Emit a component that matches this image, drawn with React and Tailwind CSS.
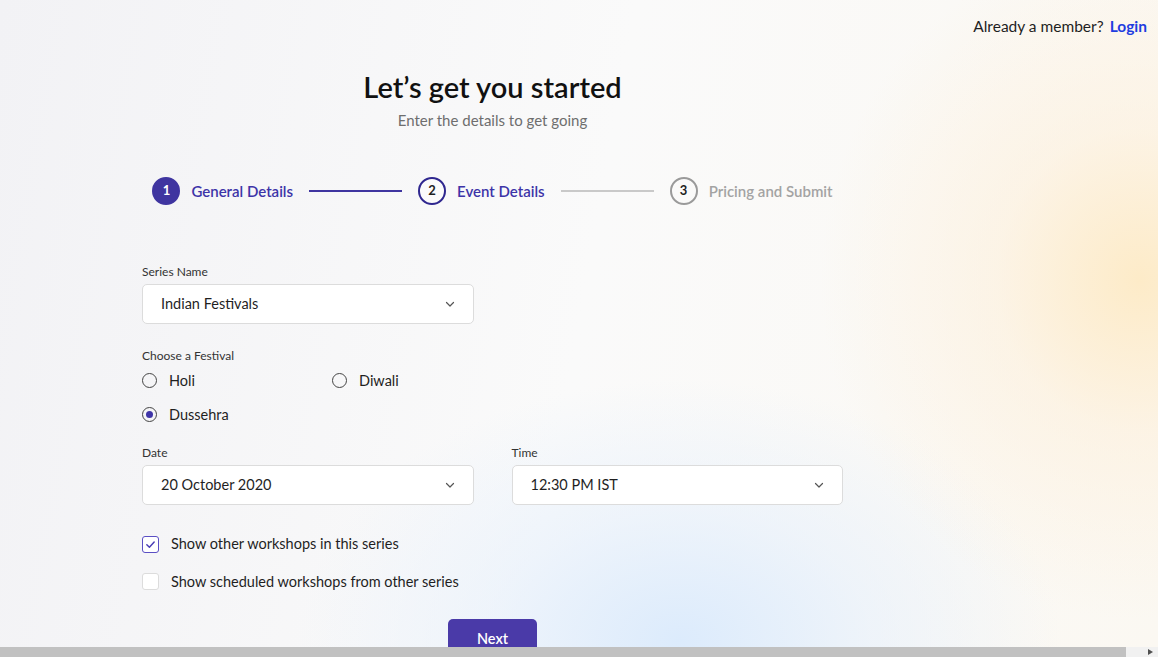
import React from 'react';

const font = { fontFamily: 'Lato, "Noto Sans", sans-serif' };

const Chevron = () => (
  <svg width="12" height="12" viewBox="0 0 12 12" fill="none" stroke="#555" strokeWidth="1.2" strokeLinecap="round" strokeLinejoin="round">
    <path d="M2.5 4.5 6 8l3.5-3.5" />
  </svg>
);

const Select = ({ value, className = '' }) => (
  <div className={`flex h-[40px] items-center justify-between rounded-[5px] border border-[#dcdcdc] bg-white pl-[18px] pr-[17px] text-[14.5px] text-[#1f1f1f] ${className}`}>
    <span>{value}</span>
    <Chevron />
  </div>
);

const Radio = ({ label, checked }) => (
  <div className="flex items-center gap-[12px]">
    <span className="flex h-[15px] w-[15px] items-center justify-center rounded-full border-[1.5px] border-[#444]">
      {checked && <span className="h-[7px] w-[7px] rounded-full bg-[#3f35a8]" />}
    </span>
    <span className="text-[14.5px] text-[#1f1f1f]">{label}</span>
  </div>
);

const Checkbox = ({ label, checked }) => (
  <div className="flex items-center gap-[12px]">
    <span className={`flex h-[17px] w-[17px] items-center justify-center rounded-[3px] border-[1.5px] bg-white ${checked ? 'border-[#5b4fc4]' : 'border-[#dcdcdc]'}`}>
      {checked && (
        <svg width="11" height="11" viewBox="0 0 12 12" fill="none" stroke="#4a3db5" strokeWidth="1.6" strokeLinecap="round" strokeLinejoin="round">
          <path d="M2 6.3 4.8 9 10 3.2" />
        </svg>
      )}
    </span>
    <span className="text-[14.5px] text-[#1f1f1f]">{label}</span>
  </div>
);

const Step = ({ n, label, state }) => {
  const circle =
    state === 'done'
      ? 'bg-[#3f35a0] text-white border-[#3f35a0]'
      : state === 'active'
      ? 'border-[#2f278f] text-[#1f1f1f] bg-white/40'
      : 'border-[#9a9a9a] text-[#1f1f1f]';
  const text = state === 'todo' ? 'text-[#a3a3a3]' : 'text-[#3d34a8]';
  return (
    <div className="flex items-center gap-[11px]">
      <span className={`flex h-[28px] w-[28px] items-center justify-center rounded-full border-2 text-[13px] font-bold ${circle}`}>{n}</span>
      <span className={`text-[15px] font-semibold ${text}`}>{label}</span>
    </div>
  );
};

export default function App() {
  return (
    <div
      style={font}
      className="flex h-[657px] w-[1158px] flex-col overflow-hidden bg-[#f6f6f8] bg-[radial-gradient(ellipse_320px_340px_at_1140px_280px,#fdebc8_0%,rgba(253,240,220,0.6)_45%,rgba(255,255,255,0)_100%),radial-gradient(ellipse_380px_260px_at_680px_640px,#dcebfc_0%,rgba(230,240,252,0.6)_50%,rgba(255,255,255,0)_100%),linear-gradient(100deg,#f2f2f5_0%,#fafafa_50%,#fbf8f2_100%)]"
    >
      <div className="relative flex-1 overflow-hidden">
        <div className="flex justify-end pr-[11px] pt-[15px] text-[15.5px] text-[#1f1f1f]">
          <span>Already a member?</span>
          <span className="ml-[6px] font-bold text-[#1f3de0]">Login</span>
        </div>

        <div className="ml-[142px] w-[701px]">
          <h1 className="mt-[31px] text-center text-[29px] font-semibold leading-[36px] text-[#111]">Let’s get you started</h1>
          <p className="mt-[4px] text-center text-[15px] text-[#6e6e6e]">Enter the details to get going</p>

          <div className="mt-[45px] flex items-center justify-center gap-[16px]">
            <Step n="1" label="General Details" state="done" />
            <span className="h-[2px] w-[93px] bg-[#3f35a0]" />
            <Step n="2" label="Event Details" state="active" />
            <span className="h-[1.5px] w-[93px] bg-[#c9c9c9]" />
            <Step n="3" label="Pricing and Submit" state="todo" />
          </div>

          <div className="mt-[58px]">
            <div className="text-[12px] text-[#333]">Series Name</div>
            <Select value="Indian Festivals" className="mt-[3px] w-[332px]" />
          </div>

          <div className="mt-[23px]">
            <div className="text-[12px] text-[#333]">Choose a Festival</div>
            <div className="mt-[5px] grid w-[300px] grid-cols-[190px_1fr] gap-y-[12px]">
              <Radio label="Holi" />
              <Radio label="Diwali" />
              <Radio label="Dussehra" checked />
            </div>
          </div>

          <div className="mt-[19px] grid grid-cols-2 gap-x-[38px]">
            <div>
              <div className="text-[12px] text-[#333]">Date</div>
              <Select value="20 October 2020" className="mt-[3px]" />
            </div>
            <div>
              <div className="text-[12px] text-[#333]">Time</div>
              <Select value="12:30 PM IST" className="mt-[3px]" />
            </div>
          </div>

          <div className="mt-[28px] flex flex-col gap-[16px]">
            <Checkbox label="Show other workshops in this series" checked />
            <Checkbox label="Show scheduled workshops from other series" />
          </div>

          <div className="mt-[26px] flex justify-center">
            <button className="h-[40px] w-[89px] rounded-[5px] bg-[#4a3aa8] text-[14.5px] font-semibold text-white">Next</button>
          </div>
        </div>
      </div>

      <div className="flex h-[10px] shrink-0">
        <div className="h-full w-[1126px] bg-[#c1c1c1]" />
        <div className="flex flex-1 items-center justify-end bg-[#f1f1f1] pr-[5px]">
          <svg width="5" height="6" viewBox="0 0 5 6"><path d="M0 0 5 3 0 6Z" fill="#505050" /></svg>
        </div>
      </div>
    </div>
  );
}
